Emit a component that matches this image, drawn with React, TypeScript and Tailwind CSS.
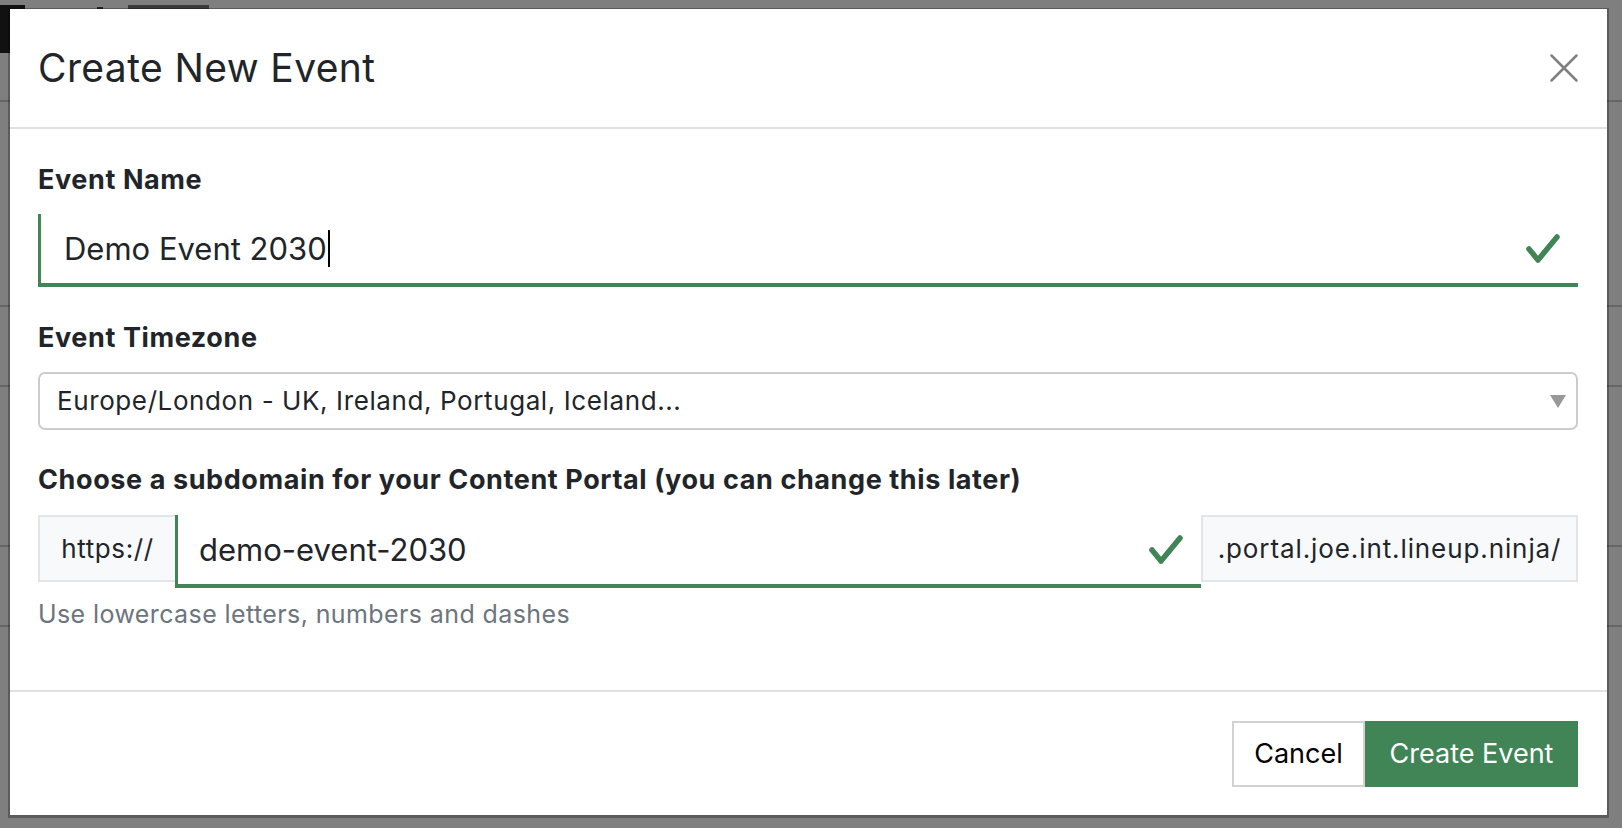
import React from 'react'

const font = { fontFamily: 'Inter, "Noto Sans", "Liberation Sans", sans-serif' }

function Check({ className }: { className?: string }) {
  return (
    <svg className={className} width="34" height="31" viewBox="0 0 34 31" fill="none">
      <path d="M3 16 L12 27 L31 4" stroke="#418557" strokeWidth="5.5" strokeLinecap="round" strokeLinejoin="round" />
    </svg>
  )
}

export default function App() {
  return (
    <div className="relative w-full h-screen overflow-hidden bg-[#7f7f7f]" style={font}>
      {/* page behind the overlay */}
      <div className="flex flex-col">
        <div className="flex items-start h-[100px]">
          <div className="mt-[5px] flex">
            <div className="w-[10px] h-[48px] bg-[#111]" />
            <div className="w-[15px] h-[4px] bg-[#111]" />
          </div>
          <div className="mt-[7px] ml-[72px] w-[6px] h-[2px] bg-[#222]" />
          <div className="mt-[5px] ml-[25px] w-[81px] h-[4px] bg-[#3a3a3e]" />
        </div>
        <div className="h-[2px] bg-[#666]" />
        <div className="h-[203px]" />
        <div className="h-[2px] bg-[#666]" />
        <div className="h-[78px]" />
        <div className="h-[2px] bg-[#666]" />
        <div className="h-[158px]" />
        <div className="h-[2px] bg-[#666]" />
        <div className="h-[78px]" />
        <div className="h-[2px] bg-[#666]" />
      </div>

      {/* modal */}
      <div className="absolute left-[10px] top-[9px] w-[1597px] h-[806px] bg-white flex flex-col shadow-[0_1px_0_2px_rgba(0,0,0,0.28)] text-[#212529]">
        {/* header */}
        <div className="h-[120px] shrink-0 border-b-2 border-[#dee2e6] flex items-center justify-between pl-[28px] pr-[29px]">
          <h5 className="text-[39px] leading-[46px] font-normal tracking-[0.4px]">Create New Event</h5>
          <button className="w-[28px] h-[28px] flex items-center justify-center">
            <svg width="28" height="28" viewBox="0 0 28 28" fill="none">
              <path d="M1.5 1.5 L26.5 26.5 M26.5 1.5 L1.5 26.5" stroke="#808080" strokeWidth="2.5" strokeLinecap="round" />
            </svg>
          </button>
        </div>

        {/* body */}
        <div className="flex-1 flex flex-col pl-[28px] pr-[29px] pt-[33px]">
          <label className="text-[27px] leading-[36px] font-bold tracking-[0.6px]">Event Name</label>
          <div className="mt-[16px] h-[73px] border-l-[3px] border-b-4 border-[#418557] flex items-center pl-[23px] pr-[18px]">
            <span className="text-[31px] leading-[40px] flex-1 flex items-center">
              Demo Event 2030
              <span className="inline-block w-[2px] h-[37px] bg-black ml-[1px]" />
            </span>
            <Check />
          </div>

          <label className="mt-[33px] text-[27px] leading-[36px] font-bold tracking-[0.6px]">Event Timezone</label>
          <div className="mt-[16px] h-[58px] rounded-[7px] border-2 border-[#cccccc] flex items-center pl-[17px] pr-[10px]">
            <span className="flex-1 text-[26px] leading-[32px] tracking-[0.6px]">Europe/London - UK, Ireland, Portugal, Iceland...</span>
            <svg width="16" height="13" viewBox="0 0 16 13">
              <path d="M0 0 L16 0 L8 13 Z" fill="#999999" />
            </svg>
          </div>

          <label className="mt-[32px] text-[27px] leading-[36px] font-bold tracking-[0.6px]">
            Choose a subdomain for your Content Portal (you can change this later)
          </label>
          <div className="mt-[17px] flex items-start">
            <div className="h-[67px] w-[137px] shrink-0 bg-[#f8f9fa] border-2 border-r-0 border-[#e3e6e9] flex items-center justify-center text-[26px] tracking-[0.6px]">
              https://
            </div>
            <div className="flex-1 h-[73px] border-l-[3px] border-b-4 border-[#418557] flex items-center pl-[21px] pr-[18px]">
              <span className="flex-1 text-[31px] leading-[38px]">demo-event-2030</span>
              <Check />
            </div>
            <div className="h-[67px] w-[377px] shrink-0 bg-[#f8f9fa] border-2 border-[#e3e6e9] flex items-center justify-center text-[26px] tracking-[0.9px]">
              .portal.joe.int.lineup.ninja/
            </div>
          </div>
          <p className="mt-[11px] text-[25px] leading-[30px] tracking-[0.4px] text-[#6c757d]">Use lowercase letters, numbers and dashes</p>
        </div>

        {/* footer */}
        <div className="h-[125px] shrink-0 border-t-2 border-[#dee2e6] flex items-start justify-end pt-[29px] pr-[29px]">
          <button className="h-[66px] w-[133px] border-2 border-[#d2d2d2] bg-white text-black text-[27px]">Cancel</button>
          <button className="h-[66px] w-[213px] bg-[#418557] text-white text-[27px]">Create Event</button>
        </div>
      </div>
    </div>
  )
}
